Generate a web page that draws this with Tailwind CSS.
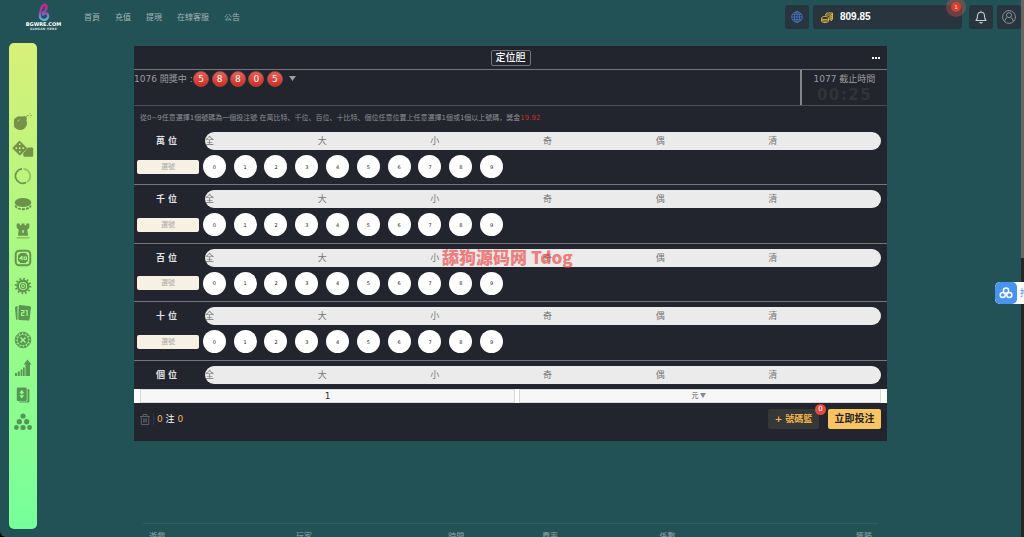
<!DOCTYPE html>
<html lang="zh-CN">
<head>
    <meta charset="UTF-8">
    <meta name="viewport" content="width=device-width, initial-scale=1.0">
    <title>定位胆</title>
    <script src="https://cdn.jsdelivr.net/npm/@tailwindcss/browser@4"></script>
</head>
<body class="bg-black font-['DejaVu_Sans','Noto_Sans_CJK_SC',sans-serif] text-[9px] leading-3">

<div class="relative flex h-screen flex-col overflow-hidden rounded-bl-md bg-[#225256]">

    <!-- Header -->
    <header class="flex h-[34px] shrink-0 items-center pl-[26px] pr-[3px]">
        <a href="#" class="flex w-[35px] flex-col items-center text-white">
            <svg class="h-[19px] w-3" viewBox="0 0 12 19" fill="none" stroke-width="2.4" stroke-linecap="round">
                <defs>
                    <linearGradient id="logo" x1="0" y1="0" x2="0" y2="1">
                        <stop offset="0" stop-color="#e0218a"/>
                        <stop offset=".45" stop-color="#9a3fa8"/>
                        <stop offset="1" stop-color="#58b8ea"/>
                    </linearGradient>
                </defs>
                <path stroke="url(#logo)" d="M5 9.800C8 7.500 9 4.500 8 2.500C7 .8 4.500 2 3.500 5C2.300 8.500 1 12 2.300 14.800C4 18 9 17.500 10 14C10.800 10.500 7.500 8.800 5.200 11.500"/>
            </svg>
            <span class="font-['DejaVu_Sans',sans-serif] text-[5px] font-bold leading-[5px]">BGWRE.COM</span>
            <span class="font-['DejaVu_Sans',sans-serif] text-[3px] font-bold leading-[4px] tracking-widest text-white/80">SLOGAN HERE</span>
        </a>
        <nav class="ml-[23px] flex gap-[15px] pt-px text-[8px] text-[#a3b3b5]">
            <a href="#">首頁</a>
            <a href="#">充值</a>
            <a href="#">提現</a>
            <a href="#">在線客服</a>
            <a href="#">公告</a>
        </nav>
        <div class="ml-auto flex items-center text-[#c9ced2]">
            <button aria-label="語言" class="flex size-6 items-center justify-center rounded-[3px] bg-[#28343e]">
                <svg class="size-3" viewBox="0 0 12 12" fill="none" stroke="#4b77c9" stroke-width=".8">
                    <circle cx="6" cy="6" r="5.300"/>
                    <ellipse cx="6" cy="6" rx="2.600" ry="5.300"/>
                    <path d="M6 .7v10.600M.7 6h10.600M1.500 3.300h9M1.500 8.700h9"/>
                </svg>
            </button>
            <div class="relative ml-1 flex h-6 w-[149px] items-center rounded-[3px] bg-[#28343e] pl-2">
                <svg class="h-[11px] w-3" viewBox="0 0 12 11" fill="none" stroke="#d9b23c" stroke-width="1">
                    <path d="M4.500 3.500V2.200L6 1h5.500v6.500L10 9"/>
                    <path d="M5 3h5M10 3v6M10 3l1.500-1.500M8 5h2l1.500-1.200M8 7h2l1.500-1.200"/>
                    <path fill="#28343e" d="M.6 6.200c0-2.400 7-2.400 7 0v3c0 1.800-7 1.800-7 0z"/>
                    <path d="M.6 6.500c1 1.500 6 1.500 7 0M.6 8.200c1 1.300 6 1.300 7 0"/>
                </svg>
                <span class="ml-[7px] font-['Liberation_Sans',sans-serif] text-[10px] font-bold text-white">809.85</span>
                <span class="absolute -right-1 -top-2 flex size-5 items-center justify-center rounded-full bg-[#c8504b]/40">
                    <span class="flex size-[10px] items-center justify-center rounded-full bg-[#d8412f] text-[5px] text-white">1</span>
                </span>
            </div>
            <button aria-label="通知" class="ml-[7px] flex size-6 items-center justify-center rounded-[3px] bg-[#28343e]">
                <svg class="h-[14px] w-3" viewBox="0 0 12 14" fill="none" stroke="currentColor" stroke-width="1.1" stroke-linejoin="round">
                    <path d="M1 10.500C2.500 9 2.500 8 2.500 6c0-2.300 1.500-3.800 3.500-3.800S9.500 3.700 9.500 6c0 2 0 3 1.500 4.500zM6 .7v1.500M4.600 12c.5 1.200 2.300 1.200 2.800 0"/>
                </svg>
            </button>
            <button aria-label="帳戶" class="ml-1 flex size-6 items-center justify-center rounded-[3px] bg-[#28343e]">
                <svg class="size-[14px]" viewBox="0 0 14 14" fill="none" stroke="#8f989e" stroke-width=".9">
                    <circle cx="7" cy="7" r="6.400"/>
                    <circle cx="7" cy="5.200" r="2.500"/>
                    <path d="M2.800 11.500c.2-2 1-3.300 2.500-4.300M11.200 11.500c-.2-2-1-3.300-2.500-4.300"/>
                </svg>
            </button>
        </div>
    </header>

    <div class="flex min-h-0 flex-1 pl-[9px]">

        <!-- Game categories -->
        <aside class="mt-[9px] h-[486px] w-7 shrink-0 rounded-[5px] bg-linear-to-b from-[#d8f078] via-[#a0fa84] via-50% to-[#76ff9b] pt-[65px]">
            <div class="grid h-[328px] grid-rows-12 place-items-center text-black">
                <a href="#" aria-label="炸彈"><svg class="size-[18px] opacity-40" viewBox="0 0 18 18" fill="currentColor">
                    <path fill-rule="evenodd" d="M8 3.500l3-.6 2 2-.6 2.500A6.900 6.900 0 1 1 8 3.500zM3.600 9.300c.6-1.700 1.700-2.500 3.200-2.900-1.800-.2-3.900 1.200-3.200 2.900z"/>
                    <path fill="none" stroke="currentColor" stroke-width=".9" d="M12.500 4C13 2.500 14 2 15 2.800M15.500 1l.6-.7M16.500 2.500h1.200M15.800 4l.6.7"/>
                </svg></a>
                <a href="#" aria-label="骰子"><svg class="h-[18px] w-[22px] opacity-40" viewBox="0 0 22 18" fill="currentColor">
                    <path fill-rule="evenodd" d="M8 1l6.500 6.500c.6.6.6 1 0 1.600L8.700 15c-.6.6-1 .6-1.500 0L1 9c-.6-.6-.6-1.200 0-1.800L6.800 1.200q.6-.6 1.200-.2zM7 3.500v1.600h1.600V3.500zM3.500 7.300v1.600h1.600V7.300zM7 7.300v1.600h1.600V7.300zM10.500 7.300v1.600h1.600V7.300zM7 11v1.600h1.600V11z"/>
                    <path d="M16 7.500h4q1.200 0 1.200 1.200v6.800q0 1.200-1.200 1.200h-7.500q-1.200 0-1.200-1.200v-2.300z"/>
                </svg></a>
                <a href="#" aria-label="圓環"><svg class="size-[18px] opacity-40" viewBox="0 0 18 18" fill="none" stroke="currentColor" stroke-width="1.700">
                    <path d="M8 1.800a7.300 7.300 0 1 0 4 13.800"/>
                    <path opacity=".5" d="M9.500 1.800a7.300 7.300 0 0 1 3.500 13.300"/>
                </svg></a>
                <a href="#" aria-label="籌碼"><svg class="size-[18px] opacity-40" viewBox="0 0 18 18" fill="currentColor">
                    <ellipse cx="9" cy="7.500" rx="8.300" ry="4.500"/>
                    <path fill="none" stroke="currentColor" stroke-width="1.800" stroke-dasharray="3 1" d="M1.200 10.500c1.500 5 14 5 15.600 0"/>
                </svg></a>
                <a href="#" aria-label="城堡"><svg class="size-[18px] opacity-40" viewBox="0 0 18 18" fill="currentColor">
                    <path fill-rule="evenodd" d="M2.700 1.500h3v1.700h1.800V1.500h3v1.700h1.800V1.500h3v4.300l-2 2 .7 6H4l.7-6-2-2zM8.200 8.300v2.500h1.600V8.300q-.8-.8-1.600 0z"/>
                    <path opacity=".5" d="M2.500 15h13v1.600h-13z"/>
                </svg></a>
                <a href="#" aria-label="基諾"><svg class="size-[18px] opacity-40" viewBox="0 0 18 18" fill="currentColor">
                    <rect x="1.700" y="1.700" width="14.600" height="14.600" rx="3.500" fill="none" stroke="currentColor" stroke-width="1.900"/>
                    <path fill-rule="evenodd" d="M6.500 4h5L14 6.500v5L11.500 14h-5L4 11.500v-5zM7.500 7L5.200 9.500v.8h2.300v1h1V7zM9.500 7.500v3.500h3.500V7.500zM10.700 8.500h1.200v1.600h-1.200z"/>
                </svg></a>
                <a href="#" aria-label="輪盤"><svg class="size-[18px] opacity-40" viewBox="0 0 18 18" fill="none" stroke="currentColor">
                    <circle cx="9" cy="9" r="5.300" stroke-width="2.400"/>
                    <circle cx="9" cy="9" r="7.300" stroke-width="2" stroke-dasharray="1.600 2.222"/>
                    <circle cx="9" cy="9" r="2.500" stroke-width="1.200"/>
                    <circle cx="9" cy="9" r=".6"/>
                </svg></a>
                <a href="#" aria-label="二十一點"><svg class="size-[18px] opacity-40" viewBox="0 0 18 18" fill="currentColor">
                    <path d="M3.500 2L1.800 2.500Q.8 3 1 4l1 11q.2 1 1.500 1z"/>
                    <path fill-rule="evenodd" d="M6 1l10 1.200q1.200.2 1 1.400l-1.500 12q-.2 1.200-1.400 1L5.500 16Q4.300 16 4.300 15l.4-13Q4.700 1 6 1zM7 6v1.100h2.300v1.200H7V12h3.500v-1.100H8.200V9.300h2.300V6zM11.500 6v1h1v5h1.200V6z"/>
                </svg></a>
                <a href="#" aria-label="轉盤"><svg class="size-[18px] opacity-40" viewBox="0 0 18 18" fill="none" stroke="currentColor">
                    <circle cx="9" cy="9" r="7.800" stroke-width="1"/>
                    <circle cx="9" cy="9" r="6.600" stroke-width="1.600" stroke-dasharray="2.400 1.056"/>
                    <path fill="currentColor" fill-rule="evenodd" stroke="none" d="M9 3.700a5.300 5.300 0 1 1 0 10.600A5.300 5.300 0 0 1 9 3.700zM7 6L6 7l2 2-2 2 1 1 2-2 2 2 1-1-2-2 2-2-1-1-2 2z"/>
                </svg></a>
                <a href="#" aria-label="走勢"><svg class="size-[18px] opacity-40" viewBox="0 0 18 18" fill="currentColor">
                    <path d="M13.500.5L17.500 5.500H16V17h-4.500V5.500H9.700zM1 14h2v3H1zM3.800 12.500h2V17h-2zM6.600 10.500h1.800V17H6.600zM9 8.500h1.700V17H9z"/>
                </svg></a>
                <a href="#" aria-label="高低"><svg class="size-[18px] opacity-40" viewBox="0 0 18 18" fill="currentColor">
                    <path fill-rule="evenodd" d="M4 1.500h7.500q1.200 0 1.200 1.200v11q0 1.200-1.200 1.200H4q-1.200 0-1.200-1.200v-11Q2.800 1.500 4 1.500zM7.800 3.800L5.300 7.300h1.700v1.200h1.600V7.300h1.700zM7.800 12.500L5.300 9.300h5z"/>
                    <path d="M13.500 3h.7q1.200 0 1.200 1.200v11q0 1.200-1.200 1.200H6q-1 0-1-.9h7q1.500 0 1.500-1.500z"/>
                </svg></a>
                <a href="#" aria-label="彈珠"><svg class="size-[18px] opacity-40" viewBox="0 0 18 18" fill="currentColor">
                    <circle cx="9" cy="3" r="2.600"/>
                    <circle cx="5.300" cy="8.700" r="2.600"/><circle cx="12.700" cy="8.700" r="2.600"/>
                    <circle cx="2.400" cy="14.500" r="2.400"/><circle cx="9" cy="14.500" r="2.600"/><circle cx="15.600" cy="14.500" r="2.400"/>
                </svg></a>
            </div>
        </aside>

        <main class="ml-[97px] mr-[137px] mt-3 min-w-0 flex-1">
            <!-- Game panel -->
            <section class="relative bg-[#22252e]">
                <div class="relative flex h-6 items-center justify-center border-b border-[#73767c]">
                    <h1 class="rounded-xs border border-[#73767c] px-1 text-[10px] font-medium leading-[14px] text-white">定位胆</h1>
                    <button aria-label="更多" class="absolute right-[7px] flex gap-px">
                        <i class="size-[2px] bg-white"></i><i class="size-[2px] bg-white"></i><i class="size-[2px] bg-white"></i>
                    </button>
                </div>

                <div class="flex h-9 border-b border-[#4c4f57] text-[#9c9c9c]">
                    <div class="flex h-[17px] flex-1 items-center">
                        <span class="w-[58px] whitespace-nowrap">1076 開獎中 :</span>
                        <div id="result" class="grid w-[92px] grid-cols-5 place-items-center"></div>
                        <svg class="ml-[5px] h-[5px] w-[7px]" viewBox="0 0 7 5" fill="#9c9c9c"><path d="M0 0h7L3.500 5z"/></svg>
                    </div>
                    <div class="w-[87px] border-l-2 border-[#85878b] pt-[3px] text-center">
                        <p>1077 截止時間</p>
                        <p class="text-[15px] font-bold leading-5 tracking-widest text-[#323434]">00:25</p>
                    </div>
                </div>

                <p class="px-[6px] pt-1 text-[7px] leading-[17px] text-[#8f9094]">從0~9任意選擇1個號碼為一個投注號 在萬比特、千位、百位、十比特、個位任意位置上任意選擇1個或1個以上號碼，獎金<span class="text-[#c23127]">19.92</span></p>

                <div class="h-[262px] overflow-hidden">
                    <div id="rows" class="grid h-[292px] grid-rows-5"></div>
                </div>

                <div class="flex h-[14px] gap-1 bg-white px-[6px]">
                    <input type="text" value="1" aria-label="注數" class="min-w-0 flex-[374] border border-[#d8d8d8] bg-[#f7f7f7] text-center text-[#333]">
                    <div class="relative flex flex-[363]">
                        <select aria-label="單位" class="w-full appearance-none border border-[#d8d8d8] bg-[#f7f7f7] pr-[10px] text-center text-[7px] text-[#555]">
                            <option>元</option>
                            <option>角</option>
                            <option>分</option>
                        </select>
                        <svg class="pointer-events-none absolute left-1/2 top-1 h-[5px] w-[6px]" viewBox="0 0 6 5" fill="#888"><path d="M0 0h6L3 5z"/></svg>
                    </div>
                </div>

                <div class="flex h-[38px] items-start px-[6px] pt-[6px]">
                    <div class="flex h-5 items-center">
                        <button aria-label="清空">
                            <svg class="h-[11px] w-[10px]" viewBox="0 0 10 11" fill="none" stroke="#63666c" stroke-width=".9">
                                <path d="M0 2.500h10M3 2.500V.5h4v2M1.300 2.500v8h7.400v-8M3.700 4.500v4M5 4.500v4M6.300 4.500v4"/>
                            </svg>
                        </button>
                        <p class="ml-[3px] border-l border-[#33363f] pl-[3px] text-[#f1b65a]">0 <span class="text-white">注</span> 0</p>
                    </div>
                    <div class="ml-auto flex gap-[9px] text-[10px] font-bold">
                        <button class="relative h-5 w-[51px] rounded-xs bg-[#363737] text-[9px] text-[#f3b44d]">+ 號碼籃
                            <span class="absolute -right-[7px] -top-[5px] size-[11px] rounded-full bg-[#e04b3c] text-[7px] font-normal leading-[11px] text-white">0</span>
                        </button>
                        <button class="h-5 w-[53px] rounded-xs bg-[#f8c462] text-[#222]">立即投注</button>
                    </div>
                </div>

                <p class="pointer-events-none absolute inset-x-0 top-[200px] pl-[308px] font-['Noto_Sans_CJK_SC',sans-serif] text-[17px] font-black leading-[22px] text-[#f03c3c]/65">舔狗源码网 Tdog</p>
            </section>

            <!-- Latest bets -->
            <div class="mx-[9px] mt-[82px] border-t border-[#2f5d61] pt-[7px]">
                <table class="w-full table-fixed text-left text-[8px] text-[#8fa3a5]">
                    <thead>
                        <tr>
                            <th class="w-[20%] pl-[6px] font-normal">遊戲</th>
                            <th class="w-[21%] pl-[6px] font-normal">玩家</th>
                            <th class="w-[13%] pl-1 font-normal">時間</th>
                            <th class="w-[16%] pl-[2px] font-normal">費率</th>
                            <th class="w-[15%] pl-[2px] font-normal">係數</th>
                            <th class="pr-[6px] text-right font-normal">獲勝</th>
                        </tr>
                    </thead>
                </table>
            </div>
        </main>
    </div>

    <!-- Scrollbar -->
    <div class="absolute inset-y-0 right-0 w-[3px] bg-[#262423]">
        <div class="h-[48%] bg-[#696563]"></div>
    </div>

    <!-- Floating tool -->
    <button class="absolute right-0 top-[282px] flex h-[22px] w-[29px] items-center overflow-hidden rounded-l-[5px] bg-white text-[#3d8ef0]">
        <span class="flex h-full w-[22px] shrink-0 items-center justify-center rounded-[5px] bg-[#4795ef]">
            <svg class="h-3 w-[14px]" viewBox="0 0 14 12" fill="none" stroke="#fff" stroke-width="1.500">
                <circle cx="7" cy="3.700" r="2.600"/>
                <circle cx="3.700" cy="8" r="2.500"/>
                <circle cx="10.300" cy="8" r="2.500"/>
            </svg>
        </span>
        <span class="ml-[3px] shrink-0">拖</span>
    </button>
</div>

<script>
    // Last draw
    document.getElementById('result').innerHTML = [5, 8, 8, 0, 5].map(n =>
        `<span class="size-4 rounded-full border border-[#a04a40] bg-linear-to-b from-[#e4605a] to-[#d02c1c] text-center text-[9px] font-medium leading-[14px] text-white">${n}</span>`
    ).join('');

    // One block per position
    const quick = ['全', '大', '小', '奇', '偶', '清'];
    document.getElementById('rows').innerHTML = ['萬 位', '千 位', '百 位', '十 位', '個 位'].map(name => `
        <div class="border-b border-[#73767c] pt-[5px]">
            <div class="flex items-center">
                <h2 class="w-[65px] text-center font-bold text-[#e4e4e4]">${name}</h2>
                <div class="ml-[6px] mr-[6px] grid h-[18px] flex-1 grid-cols-6 overflow-hidden rounded-full bg-[#ebebeb] text-[#777]">
                    ${quick.map(q => `<button class="text-left">${q}</button>`).join('')}
                </div>
            </div>
            <div class="mt-[5px] flex items-center">
                <button class="ml-[3px] h-[14px] w-[62px] rounded-xs bg-[#f7f1e3] text-[7px] leading-[14px] text-[#aaa]">選號</button>
                <div class="grid w-[308px] grid-cols-10 place-items-center">
                    ${[0, 1, 2, 3, 4, 5, 6, 7, 8, 9].map(n => `<button class="size-[23px] rounded-full bg-white text-[5px] text-[#222]">${n}</button>`).join('')}
                </div>
            </div>
        </div>`
    ).join('');
</script>
</body>
</html>
